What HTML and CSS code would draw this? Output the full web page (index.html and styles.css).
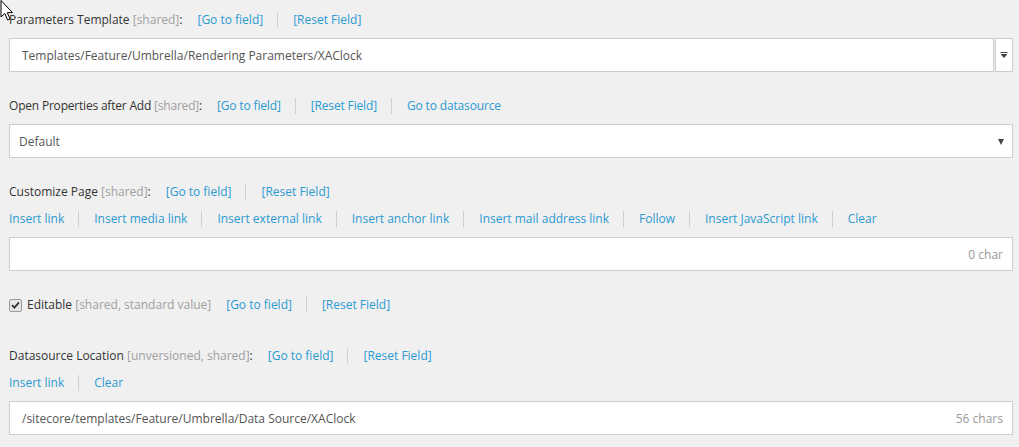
FILE: index.html
```html
<!DOCTYPE html>
<html>
<head>
<meta charset="utf-8">
<link rel="stylesheet" href="styles.css">
</head>
<body>
<div class="page">
  <div class="field">
    <div class="label-row">
      <span class="label">Parameters Template <span class="meta">[shared]</span>:</span>
      <span class="actions"><a>[Go to field]</a><a>[Reset Field]</a></span>
    </div>
    <div class="combo">
      <div class="box combo-input">Templates/Feature/Umbrella/Rendering Parameters/XAClock</div>
      <div class="combo-btn"><svg width="8" height="6" viewBox="0 0 8 6"><rect x="0.5" y="0" width="7" height="1" fill="#444"/><path d="M0.5 2 L7.5 2 L4 6 Z" fill="#444"/></svg></div>
    </div>
  </div>

  <div class="field">
    <div class="label-row label-row-tight">
      <span class="label">Open Properties after Add <span class="meta">[shared]</span>:</span>
      <span class="actions"><a>[Go to field]</a><a>[Reset Field]</a><a>Go to datasource</a></span>
    </div>
    <div class="box select">Default<span class="caret"></span></div>
  </div>

  <div class="field">
    <div class="label-row">
      <span class="label">Customize Page <span class="meta">[shared]</span>:</span>
      <span class="actions"><a>[Go to field]</a><a>[Reset Field]</a></span>
    </div>
    <div class="toolbar">
      <a>Insert link</a><a>Insert media link</a><a>Insert external link</a><a>Insert anchor link</a><a>Insert mail address link</a><a>Follow</a><a>Insert JavaScript link</a><a>Clear</a>
    </div>
    <div class="box text-input"><span class="value"></span><span class="count">0 char</span></div>
  </div>

  <div class="field field-check">
    <div class="label-row">
      <span class="check"><svg width="9" height="8" viewBox="0 0 9 8"><path d="M1 4.2 L3.4 6.6 L8 1.4" fill="none" stroke="#333" stroke-width="1.8"/></svg></span>
      <span class="label">Editable <span class="meta">[shared, standard value]</span></span>
      <span class="actions"><a>[Go to field]</a><a>[Reset Field]</a></span>
    </div>
  </div>

  <div class="field">
    <div class="label-row">
      <span class="label">Datasource Location <span class="meta">[unversioned, shared]</span>:</span>
      <span class="actions"><a>[Go to field]</a><a>[Reset Field]</a></span>
    </div>
    <div class="toolbar">
      <a>Insert link</a><a>Clear</a>
    </div>
    <div class="box text-input"><span class="value">/sitecore/templates/Feature/Umbrella/Data Source/XAClock</span><span class="count">56 chars</span></div>
  </div>
</div>
<svg class="cursor" width="14" height="22" viewBox="0 0 14 22"><path d="M1 0.5 L1 17 L4.8 13.4 L7.6 20 L10 19 L7.3 12.6 L12.5 12.6 Z" fill="#fff" stroke="#000" stroke-width="1" stroke-linejoin="round"/></svg>
</body>
</html>
```

FILE: styles.css
```css
html, body {
  margin: 0;
  padding: 0;
  background: #f0f0f0;
}

body {
  font-family: "Open Sans", "Liberation Sans", sans-serif;
  font-size: 12px;
  color: #333;
  position: relative;
  width: 1019px;
  height: 447px;
  overflow: hidden;
}

.page {
  padding: 10px 6px 0 9px;
}

.field {
  margin-bottom: 24px;
}

.field-check {
  margin-top: 1px;
  margin-bottom: 33px;
}

.label-row {
  display: flex;
  align-items: center;
  height: 16px;
  padding-top: 2px;
  line-height: 16px;
  margin-bottom: 10px;
  white-space: nowrap;
}

.label-row-tight .label {
  letter-spacing: -0.2px;
}

.label-row-tight .actions a {
  letter-spacing: -0.15px;
}

.field-check .label-row {
  margin-bottom: 0;
}

.label {
  color: #333;
}

.meta {
  color: #a0a0a0;
}

.actions {
  display: flex;
  align-items: center;
}

a {
  color: #2b9ad2;
  cursor: pointer;
}

.actions a {
  display: inline-block;
  padding: 0 14px 0 15px;
  line-height: 16px;
}

.actions a + a {
  border-left: 1px solid #cfcfcf;
}

.toolbar {
  display: flex;
  align-items: center;
  height: 18px;
  margin-bottom: 9px;
  white-space: nowrap;
}

.toolbar a {
  display: inline-block;
  padding: 0 14px 0 15px;
  line-height: 16px;
}

.toolbar a:first-child {
  padding-left: 0;
}

.toolbar a + a {
  border-left: 1px solid #cfcfcf;
}

.box {
  box-sizing: border-box;
  height: 34px;
  background: #fff;
  border: 1px solid #cdcdcd;
  display: flex;
  align-items: center;
  color: #555;
}

.combo {
  display: flex;
  gap: 1px;
}

.combo-input {
  flex: 1;
  padding-left: 12px;
}

.combo-btn {
  box-sizing: border-box;
  width: 18px;
  height: 34px;
  background: #fff;
  border: 1px solid #cdcdcd;
  display: flex;
  align-items: center;
  justify-content: center;
}

.select {
  padding: 0 8px 0 9px;
  justify-content: space-between;
}

.caret {
  width: 0;
  height: 0;
  border-left: 3.5px solid transparent;
  border-right: 3.5px solid transparent;
  border-top: 6px solid #444;
  margin-top: 1px;
}

.text-input {
  padding: 0 9px 0 12px;
  justify-content: space-between;
}

.count {
  color: #999;
}

.check {
  box-sizing: border-box;
  width: 13px;
  height: 13px;
  border: 1px solid #9a9a9a;
  border-radius: 2px;
  background: #e8e8e8;
  display: flex;
  align-items: center;
  justify-content: center;
  margin-right: 5px;
}

.check svg {
  display: block;
}

.cursor {
  position: absolute;
  left: 0;
  top: 0;
}
```
